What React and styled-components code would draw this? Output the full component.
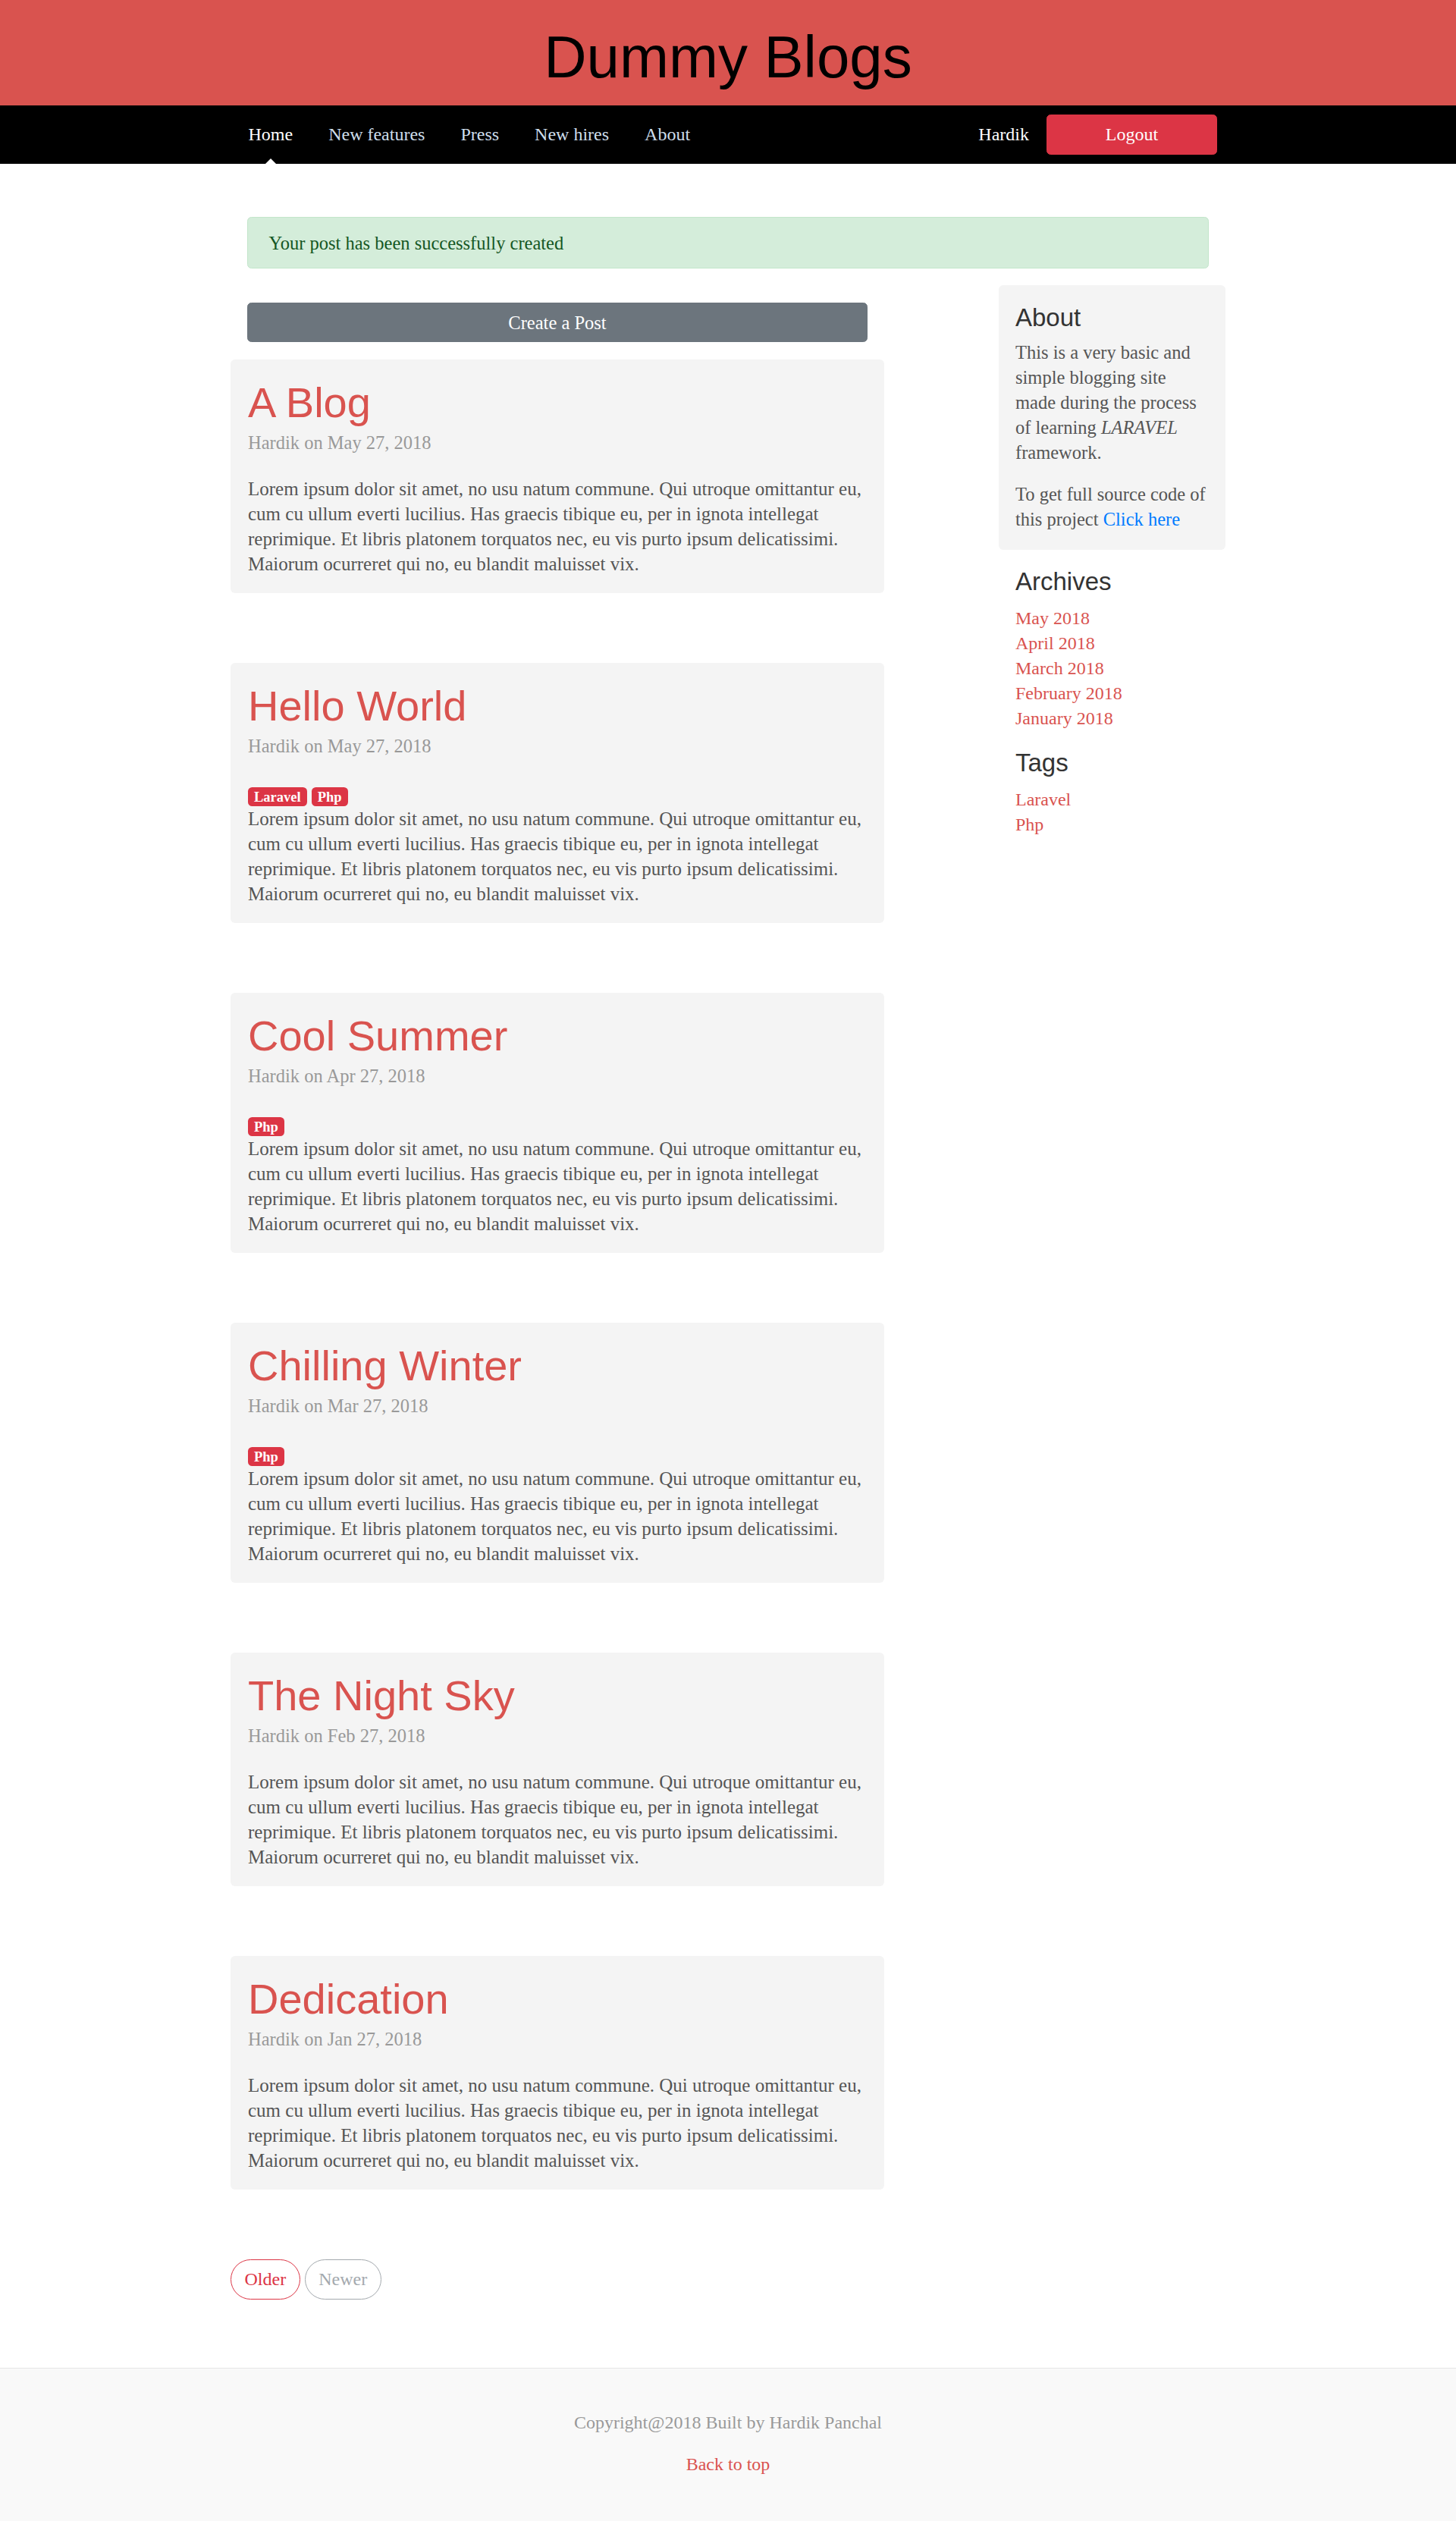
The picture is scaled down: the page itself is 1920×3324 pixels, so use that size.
import React from "react";
import styled, { createGlobalStyle, css } from "styled-components";

const posts = [
  { title: "A Blog", date: "May 27, 2018", tags: [] },
  { title: "Hello World", date: "May 27, 2018", tags: ["Laravel", "Php"] },
  { title: "Cool Summer", date: "Apr 27, 2018", tags: ["Php"] },
  { title: "Chilling Winter", date: "Mar 27, 2018", tags: ["Php"] },
  { title: "The Night Sky", date: "Feb 27, 2018", tags: [] },
  { title: "Dedication", date: "Jan 27, 2018", tags: [] },
];

const lorem =
  "Lorem ipsum dolor sit amet, no usu natum commune. Qui utroque omittantur eu, cum cu ullum everti lucilius. Has graecis tibique eu, per in ignota intellegat reprimique. Et libris platonem torquatos nec, eu vis purto ipsum delicatissimi. Maiorum ocurreret qui no, eu blandit maluisset vix.";

const archives = ["May 2018", "April 2018", "March 2018", "February 2018", "January 2018"];
const navItems = ["Home", "New features", "Press", "New hires", "About"];

const App = () => {
  return (
    <>
      <GlobalStyle />
      <Masthead>
        <SiteTitle>Dummy Blogs</SiteTitle>
      </Masthead>

      <NavBar>
        <NavInner>
          <NavLinks>
            {navItems.map((item, i) => (
              <NavLink key={item} href="#" $active={i === 0}>
                {item}
              </NavLink>
            ))}
          </NavLinks>
          <UserArea>
            <UserName>Hardik</UserName>
            <LogoutButton>Logout</LogoutButton>
          </UserArea>
        </NavInner>
      </NavBar>

      <Container>
        <Alert>Your post has been successfully created</Alert>

        <Row>
          <MainCol>
            <CreateButton>Create a Post</CreateButton>

            {posts.map((post) => (
              <Post key={post.title}>
                <PostTitle>{post.title}</PostTitle>
                <PostMeta>Hardik on {post.date}</PostMeta>
                {post.tags.length > 0 && (
                  <TagRow>
                    {post.tags.map((tag) => (
                      <Badge key={tag}>{tag}</Badge>
                    ))}
                  </TagRow>
                )}
                <PostBody>{lorem}</PostBody>
              </Post>
            ))}

            <Pager>
              <PagerButton href="#" $variant="danger">Older</PagerButton>
              <PagerButton href="#" $variant="disabled">Newer</PagerButton>
            </Pager>
          </MainCol>

          <Sidebar>
            <AboutBox>
              <SideHeading>About</SideHeading>
              <SideText>
                This is a very basic and simple blogging site made during the process of
                learning <em>LARAVEL</em> framework.
              </SideText>
              <SideText>
                To get full source code of this project <BlueLink href="#">Click here</BlueLink>
              </SideText>
            </AboutBox>

            <SideModule>
              <SideHeading>Archives</SideHeading>
              <SideList>
                {archives.map((a) => (
                  <li key={a}>
                    <RedLink href="#">{a}</RedLink>
                  </li>
                ))}
              </SideList>
            </SideModule>

            <SideModule>
              <SideHeading>Tags</SideHeading>
              <SideList>
                <li>
                  <RedLink href="#">Laravel</RedLink>
                </li>
                <li>
                  <RedLink href="#">Php</RedLink>
                </li>
              </SideList>
            </SideModule>
          </Sidebar>
        </Row>
      </Container>

      <Footer>
        <FooterText>Copyright@2018 Built by Hardik Panchal</FooterText>
        <FooterText>
          <RedLink href="#">Back to top</RedLink>
        </FooterText>
      </Footer>
    </>
  );
};

const GlobalStyle = createGlobalStyle`
  * { box-sizing: border-box; }
  body {
    margin: 0;
    background: #fff;
    color: #555;
    font-family: "Liberation Serif", Georgia, serif;
  }
`;

const Masthead = styled.header`
  height: 139px;
  padding-top: 10px;
  background: #d9534f;
  display: flex;
  align-items: center;
  justify-content: center;
`;

const SiteTitle = styled.h1`
  margin: 0;
  font-family: "Liberation Sans", Arial, sans-serif;
  font-weight: 400;
  font-size: 78px;
  line-height: 1;
  color: #000;
`;

const NavBar = styled.nav`
  height: 77px;
  background: #000;
`;

const NavInner = styled.div`
  width: 1312px;
  height: 100%;
  margin: 0 auto;
  padding-right: 11px;
  display: flex;
  align-items: center;
  justify-content: space-between;
`;

const NavLinks = styled.div`
  display: flex;
  height: 100%;
`;

const NavLink = styled.a`
  position: relative;
  display: flex;
  align-items: center;
  height: 100%;
  padding: 0 23.5px;
  font-size: 24px;
  line-height: 33px;
  text-decoration: none;
  color: ${(p) => (p.$active ? "#fff" : "#cdddeb")};

  ${(p) =>
    p.$active &&
    css`
      &::after {
        content: "";
        position: absolute;
        bottom: 0;
        left: 50%;
        margin-left: -7px;
        border: 7px solid transparent;
        border-top: 0;
        border-bottom-color: #fff;
      }
    `}
`;

const UserArea = styled.div`
  display: flex;
  align-items: center;
  gap: 23px;
`;

const UserName = styled.span`
  font-size: 24px;
  line-height: 33px;
  color: #fff;
`;

const LogoutButton = styled.button`
  width: 225px;
  height: 53px;
  border: 1px solid #dc3545;
  border-radius: 5.5px;
  background: #dc3545;
  color: #fff;
  font-family: inherit;
  font-size: 24px;
  line-height: 33px;
`;

const Container = styled.main`
  width: 1312px;
  margin: 0 auto;
  padding-top: 70px;
`;

const Alert = styled.div`
  margin: 0 22px 22px;
  padding: 16.5px 27.5px;
  border: 1px solid #c3e6cb;
  border-radius: 5.5px;
  background: #d4edda;
  color: #155724;
  font-size: 24.5px;
  line-height: 33px;
`;

const Row = styled.div`
  display: flex;
  justify-content: space-between;
  align-items: flex-start;
`;

const MainCol = styled.div`
  width: 862px;
`;

const CreateButton = styled.button`
  display: block;
  width: calc(100% - 44px);
  height: 52px;
  margin: 23px 22px;
  border: 1px solid #6c757d;
  border-radius: 5.5px;
  background: #6c757d;
  color: #fff;
  font-family: inherit;
  font-size: 24.5px;
  line-height: 33px;
`;

const Post = styled.article`
  margin-bottom: 92px;
  padding: 21px 23px 22px;
  border-radius: 6px;
  background: #f4f4f4;
`;

const PostTitle = styled.h2`
  margin: 0;
  font-family: "Liberation Sans", Arial, sans-serif;
  font-weight: 400;
  font-size: 56px;
  line-height: 72px;
  color: #d9534f;
`;

const PostMeta = styled.p`
  margin: 0 0 28px;
  font-size: 24.5px;
  line-height: 33px;
  color: #999;
`;

const TagRow = styled.div`
  display: flex;
  align-items: flex-end;
  gap: 6px;
  height: 35px;
`;

const Badge = styled.span`
  display: inline-block;
  padding: 3.5px 8px 3px;
  border-radius: 5.5px;
  background: #dc3545;
  color: #fff;
  font-size: 18.5px;
  font-weight: 700;
  line-height: 1;
`;

const PostBody = styled.p`
  margin: 0;
  font-size: 25px;
  line-height: 33px;
  color: #555;
`;

const Pager = styled.nav`
  display: flex;
  gap: 6px;
  margin-bottom: 90px;
`;

const PagerButton = styled.a`
  display: inline-flex;
  align-items: center;
  height: 53px;
  padding: 0 17.5px;
  border: 1px solid;
  border-radius: 27px;
  font-size: 24px;
  line-height: 33px;
  text-decoration: none;

  ${(p) =>
    p.$variant === "danger"
      ? css`
          color: #dc3545;
          border-color: #dc3545;
        `
      : css`
          color: #6c757d;
          border-color: #6c757d;
          opacity: 0.62;
        `}
`;

const Sidebar = styled.aside`
  width: 299px;
`;

const AboutBox = styled.div`
  padding: 23px 22px 24px;
  border-radius: 6px;
  background: #f4f4f4;
`;

const SideHeading = styled.h4`
  margin: 0 0 9px;
  font-family: "Liberation Sans", Arial, sans-serif;
  font-weight: 400;
  font-size: 33px;
  line-height: 40px;
  color: #333;
`;

const SideText = styled.p`
  margin: 0 0 22px;
  font-size: 24.5px;
  line-height: 33px;
  color: #555;

  &:last-child {
    margin-bottom: 0;
  }
`;

const SideModule = styled.div`
  margin-top: 22px;
  padding-left: 22px;

  ${SideHeading} {
    margin-bottom: 12px;
  }
`;

const SideList = styled.ol`
  margin: 0;
  padding: 0;
  list-style: none;
  font-size: 24px;
  line-height: 33px;
`;

const RedLink = styled.a`
  color: #d9534f;
  text-decoration: none;
`;

const BlueLink = styled.a`
  color: #007bff;
  text-decoration: none;
`;

const Footer = styled.footer`
  padding: 55px 0 58px;
  border-top: 1px solid #e5e5e5;
  background: #f9f9f9;
  text-align: center;
  color: #999;
`;

const FooterText = styled.p`
  margin: 0 0 22px;
  font-size: 24px;
  line-height: 33px;

  &:last-child {
    margin-bottom: 0;
  }
`;

export default App;
